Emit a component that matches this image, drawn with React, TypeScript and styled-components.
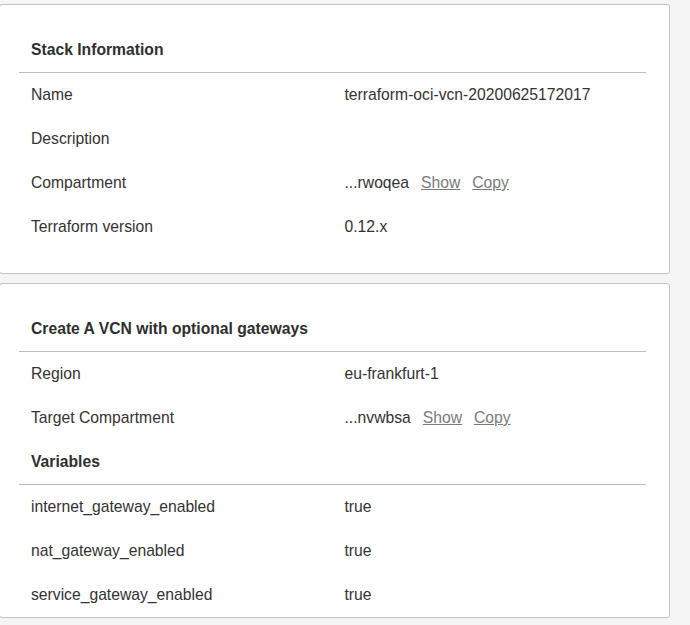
import React from 'react';
import styled, { createGlobalStyle } from 'styled-components';

const GlobalStyle = createGlobalStyle`
  html, body {
    margin: 0;
    padding: 0;
    background: #f5f5f5;
  }
  body {
    font-family: "Liberation Sans", Arial, sans-serif;
    font-size: 15.7px;
    color: #333333;
  }
`;

const Page = styled.div`
  display: flex;
  flex-direction: column;
  gap: 9px;
  width: 671px;
  margin-left: -1px;
  padding-top: 4px;
`;

const Card = styled.section<{ $bottom?: number }>`
  background: #ffffff;
  border: 1px solid #c3c3c8;
  border-radius: 3px;
  padding: 0 23px ${(p) => p.$bottom ?? 0}px 19px;
`;

const Title = styled.h2<{ $top?: number }>`
  margin: 0;
  padding: ${(p) => p.$top ?? 0}px 12px 0;
  height: 44px;
  line-height: 44px;
  font-size: 15.7px;
  font-weight: 700;
  color: #2f2f2f;
  border-bottom: 1px solid #b9bcc4;
`;

const Row = styled.div`
  display: grid;
  grid-template-columns: 1fr 1fr;
  height: 44px;
  line-height: 44px;
`;

const Cell = styled.div`
  padding: 0 12px;
  white-space: nowrap;
`;

const Link = styled.a`
  color: #7a7a7a;
  text-decoration: underline;
  margin-left: 12px;
  cursor: pointer;
`;

type Item = { label: string; value?: string; ocid?: boolean };

const stack: Item[] = [
  { label: 'Name', value: 'terraform-oci-vcn-20200625172017' },
  { label: 'Description' },
  { label: 'Compartment', value: '...rwoqea', ocid: true },
  { label: 'Terraform version', value: '0.12.x' },
];

const vcn: Item[] = [
  { label: 'Region', value: 'eu-frankfurt-1' },
  { label: 'Target Compartment', value: '...nvwbsa', ocid: true },
];

const variables: Item[] = [
  { label: 'internet_gateway_enabled', value: 'true' },
  { label: 'nat_gateway_enabled', value: 'true' },
  { label: 'service_gateway_enabled', value: 'true' },
];

const Rows = ({ items }: { items: Item[] }) => (
  <>
    {items.map((it) => (
      <Row key={it.label}>
        <Cell>{it.label}</Cell>
        <Cell>
          {it.value}
          {it.ocid && (
            <>
              <Link>Show</Link>
              <Link>Copy</Link>
            </>
          )}
        </Cell>
      </Row>
    ))}
  </>
);

const App = () => (
  <>
    <GlobalStyle />
    <Page>
      <Card $bottom={24}>
        <Title $top={23}>Stack Information</Title>
        <Rows items={stack} />
      </Card>
      <Card>
        <Title $top={23}>Create A VCN with optional gateways</Title>
        <Rows items={vcn} />
        <Title>Variables</Title>
        <Rows items={variables} />
      </Card>
    </Page>
  </>
);

export default App;
